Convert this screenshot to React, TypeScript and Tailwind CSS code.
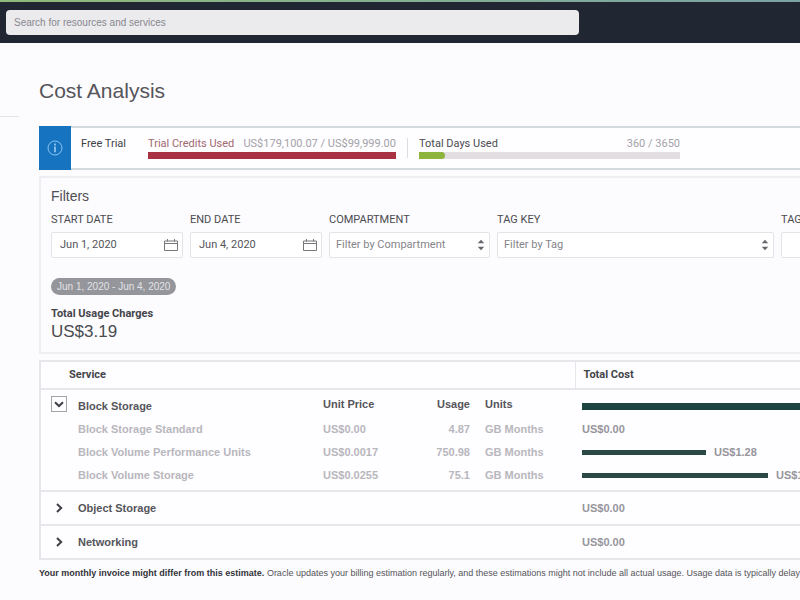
import { useState } from 'react';

interface UsageLine {
  name: string;
  unitPrice: string;
  usage: string;
  units: string;
  cost: string;
  barWidth: number;
}

interface Service {
  name: string;
  cost: string;
  lines: UsageLine[];
}

const services: Service[] = [
  {
    name: 'Block Storage',
    cost: '',
    lines: [
      { name: 'Block Storage Standard', unitPrice: 'US$0.00', usage: '4.87', units: 'GB Months', cost: 'US$0.00', barWidth: 0 },
      { name: 'Block Volume Performance Units', unitPrice: 'US$0.0017', usage: '750.98', units: 'GB Months', cost: 'US$1.28', barWidth: 124 },
      { name: 'Block Volume Storage', unitPrice: 'US$0.0255', usage: '75.1', units: 'GB Months', cost: 'US$1.91', barWidth: 186 },
    ],
  },
  { name: 'Object Storage', cost: 'US$0.00', lines: [] },
  { name: 'Networking', cost: 'US$0.00', lines: [] },
];

const CalendarIcon = () => (
  <svg width="14" height="12" viewBox="0 0 14 12" fill="none" stroke="#77777c" aria-hidden="true">
    <path d="M.5 2h13v9.5H.5zM.5 4.5h13M3.5 0v2.5M10.5 0v2.5" />
  </svg>
);

const SortIcon = () => (
  <svg
    className="pointer-events-none absolute right-1 top-1/2 -translate-y-1/2"
    width="10"
    height="14"
    viewBox="0 0 10 14"
    fill="#66666b"
    aria-hidden="true"
  >
    <path d="M1.8 5.2 5 1.8l3.2 3.4zM1.8 8.8 5 12.2l3.2-3.4z" />
  </svg>
);

const Chevron = ({ open }: { open: boolean }) => (
  <svg width="10" height="10" viewBox="0 0 10 10" fill="none" stroke="#3f3f44" strokeWidth="2" aria-hidden="true">
    <path d={open ? 'M1 3.2 5 7 9 3.2' : 'M3 1 7.2 5 3 9'} />
  </svg>
);

const DateField = ({ id, label, initial }: { id: string; label: string; initial: string }) => {
  const [value, setValue] = useState(initial);
  return (
    <div>
      <label htmlFor={id} className="block leading-4 text-[#4b4b50]">{label}</label>
      <div className="mt-1 flex h-[26px] items-center rounded-xs border border-[#e4e3e8] bg-white pl-2 pr-1">
        <input
          id={id}
          type="text"
          value={value}
          onChange={(e) => setValue(e.target.value)}
          className="w-full min-w-0 text-[#55555a] outline-none"
        />
        <button type="button" aria-label={`Open calendar for ${label}`} className="shrink-0">
          <CalendarIcon />
        </button>
      </div>
    </div>
  );
};

const SelectField = ({ id, label, placeholder }: { id: string; label: string; placeholder: string }) => (
  <div className="min-w-0">
    <label htmlFor={id} className="block leading-4 text-[#4b4b50]">{label}</label>
    <div className="relative mt-1">
      <select id={id} className="h-[26px] w-full appearance-none rounded-xs border border-[#e4e3e8] bg-white px-1.5 text-[#85848a]">
        <option>{placeholder}</option>
      </select>
      <SortIcon />
    </div>
  </div>
);

export default function App() {
  const [openService, setOpenService] = useState<string | null>('Block Storage');

  return (
    <div className="min-h-screen overflow-hidden bg-[#fcfbfe] font-['Liberation_Sans',Arial,sans-serif] text-[11px] text-[#55555a]">
      {/* Top bar */}
      <div className="h-0.5 bg-linear-to-r from-[#8fba78] to-[#7aa3a6]" />
      <header className="bg-[#212633] px-1.5 py-2">
        <input
          type="search"
          aria-label="Search"
          placeholder="Search for resources and services"
          className="block h-[25px] w-[573px] max-w-full rounded-sm bg-[#ebeaed] px-2 text-[10px] placeholder:text-[#88878d]"
        />
      </header>

      <div className="flex">
        <aside className="mr-5 h-[74px] w-[19px] shrink-0 border-b border-[#e4e3e8]" />

        <main className="min-w-0 flex-1 pt-9">
          <h1 className="text-[21px] leading-6 text-[#55555a]">Cost Analysis</h1>

          {/* Free trial banner */}
          <section className="mt-[23px] flex h-11 border-y-2 border-[#d3dbdf] bg-[#fefdff] font-[Roboto,sans-serif]">
            <div className="-my-0.5 flex w-8 shrink-0 items-center justify-center bg-[#1573c0]">
              <svg width="18" height="18" viewBox="0 0 18 18" fill="none" stroke="#8cc4ee" aria-hidden="true">
                <circle cx="9" cy="9" r="7" />
                <path d="M9 4.6v1.8M9 7.4v5.8" strokeWidth="1.8" />
              </svg>
            </div>
            <div className="flex items-start pl-2.5 pt-2">
              <span className="w-[67px] leading-4 text-[#3f3f44]">Free Trial</span>
              <div className="w-[248px]">
                <div className="flex justify-between leading-4">
                  <span className="text-[#a0686f]">Trial Credits Used</span>
                  <span className="text-[#a3a2a8]">US$179,100.07 / US$99,999.00</span>
                </div>
                <div className="h-[7px] bg-[#a83244]" />
              </div>
              <div className="mx-[11px] mt-0.5 h-5 w-px bg-[#dddce1]" />
              <div className="w-[261px]">
                <div className="flex justify-between leading-4">
                  <span className="text-[#4b4b50]">Total Days Used</span>
                  <span className="text-[#a3a2a8]">360 / 3650</span>
                </div>
                <div className="h-[7px] bg-[#e2dee1]">
                  <div className="h-full w-[26px] rounded-r-sm bg-[#8db43c]" />
                </div>
              </div>
            </div>
          </section>

          {/* Filters */}
          <section className="mt-1.5 border-2 border-r-0 border-[#eeedf1] pb-2.5 pl-2.5 pt-2 font-[Roboto,sans-serif]">
            <h2 className="font-['Liberation_Sans',Arial,sans-serif] text-sm leading-5 text-[#4f4f54]">Filters</h2>
            <div className="mt-1.5 grid grid-cols-[132px_132px_161px_277px_277px] gap-[7px]">
              <DateField id="start-date" label="START DATE" initial="Jun 1, 2020" />
              <DateField id="end-date" label="END DATE" initial="Jun 4, 2020" />
              <SelectField id="compartment" label="COMPARTMENT" placeholder="Filter by Compartment" />
              <SelectField id="tag-key" label="TAG KEY" placeholder="Filter by Tag" />
              <SelectField id="tag-value" label="TAG VALUE" placeholder="" />
            </div>
            <div className="mt-5 flex">
              <span className="rounded-full bg-[#94969b] px-1.5 font-['Liberation_Sans',Arial,sans-serif] text-[10px] leading-[17px] text-[#e2e2e6]">
                Jun 1, 2020 - Jun 4, 2020
              </span>
            </div>
            <p className="mt-[11px] font-bold leading-4 text-[#444449]">Total Usage Charges</p>
            <p className="font-['Liberation_Sans',Arial,sans-serif] text-[17px] leading-5 text-[#4b4b50]">US$3.19</p>
          </section>

          {/* Usage table */}
          <table className="mt-1.5 w-full table-fixed border-collapse border-2 border-r-0 border-[#e8e6eb] bg-[#fefdff] text-left font-bold">
            <colgroup>
              <col className="w-[38px]" />
              <col className="w-[245px]" />
              <col className="w-[77px]" />
              <col className="w-[70px]" />
              <col className="w-[105px]" />
              <col />
            </colgroup>
            <thead>
              <tr className="h-7 border-b-2 border-[#e8e6eb] font-[Roboto,sans-serif] text-[#444449]">
                <th colSpan={5} className="border-r border-[#e8e6eb] pl-7">Service</th>
                <th className="pl-2">Total Cost</th>
              </tr>
            </thead>
            {services.map((service) => {
              const open = openService === service.name && service.lines.length > 0;
              return (
                <tbody key={service.name} className="border-b-2 border-[#e8e6eb]">
                  <tr className={open ? 'h-[29px]' : 'h-[34px]'}>
                    <td className="pl-2.5">
                      <button
                        type="button"
                        aria-label={`Toggle ${service.name}`}
                        aria-expanded={open}
                        onClick={() => setOpenService(open ? null : service.name)}
                        className={
                          open
                            ? 'flex size-4 items-center justify-center border border-[#a5a4aa]'
                            : 'flex size-4 items-center justify-center'
                        }
                      >
                        <Chevron open={open} />
                      </button>
                    </td>
                    <th className={open ? 'pt-1' : ''}>{service.name}</th>
                    <th>{open && 'Unit Price'}</th>
                    <th className="text-right">{open && 'Usage'}</th>
                    <th className="pl-[15px]">{open && 'Units'}</th>
                    <td className="pl-[7px] text-[#96959b]">
                      {open ? <div className="mt-1 h-[7px] bg-[#1c4541]" /> : service.cost}
                    </td>
                  </tr>
                  {open &&
                    service.lines.map((line) => (
                      <tr key={line.name} className="h-[23px] text-[#b8b7bd]">
                        <td />
                        <td>{line.name}</td>
                        <td>{line.unitPrice}</td>
                        <td className="text-right">{line.usage}</td>
                        <td className="pl-[15px]">{line.units}</td>
                        <td className="whitespace-nowrap pl-[7px] text-[#96959b]">
                          <div className="flex items-center gap-2">
                            {line.barWidth > 0 && (
                              <div className="h-[5px] shrink-0 bg-[#2b4a46]" style={{ width: line.barWidth }} />
                            )}
                            {line.cost}
                          </div>
                        </td>
                      </tr>
                    ))}
                  {open && <tr className="h-1"><td colSpan={6} /></tr>}
                </tbody>
              );
            })}
          </table>

          <p className="mt-[7px] whitespace-nowrap text-[9px] leading-3 text-[#55555a]">
            <b className="text-[#333338]">Your monthly invoice might differ from this estimate.</b> Oracle updates your
            billing estimation regularly, and these estimations might not include all actual usage. Usage data is
            typically delayed
          </p>
        </main>
      </div>
    </div>
  );
}
